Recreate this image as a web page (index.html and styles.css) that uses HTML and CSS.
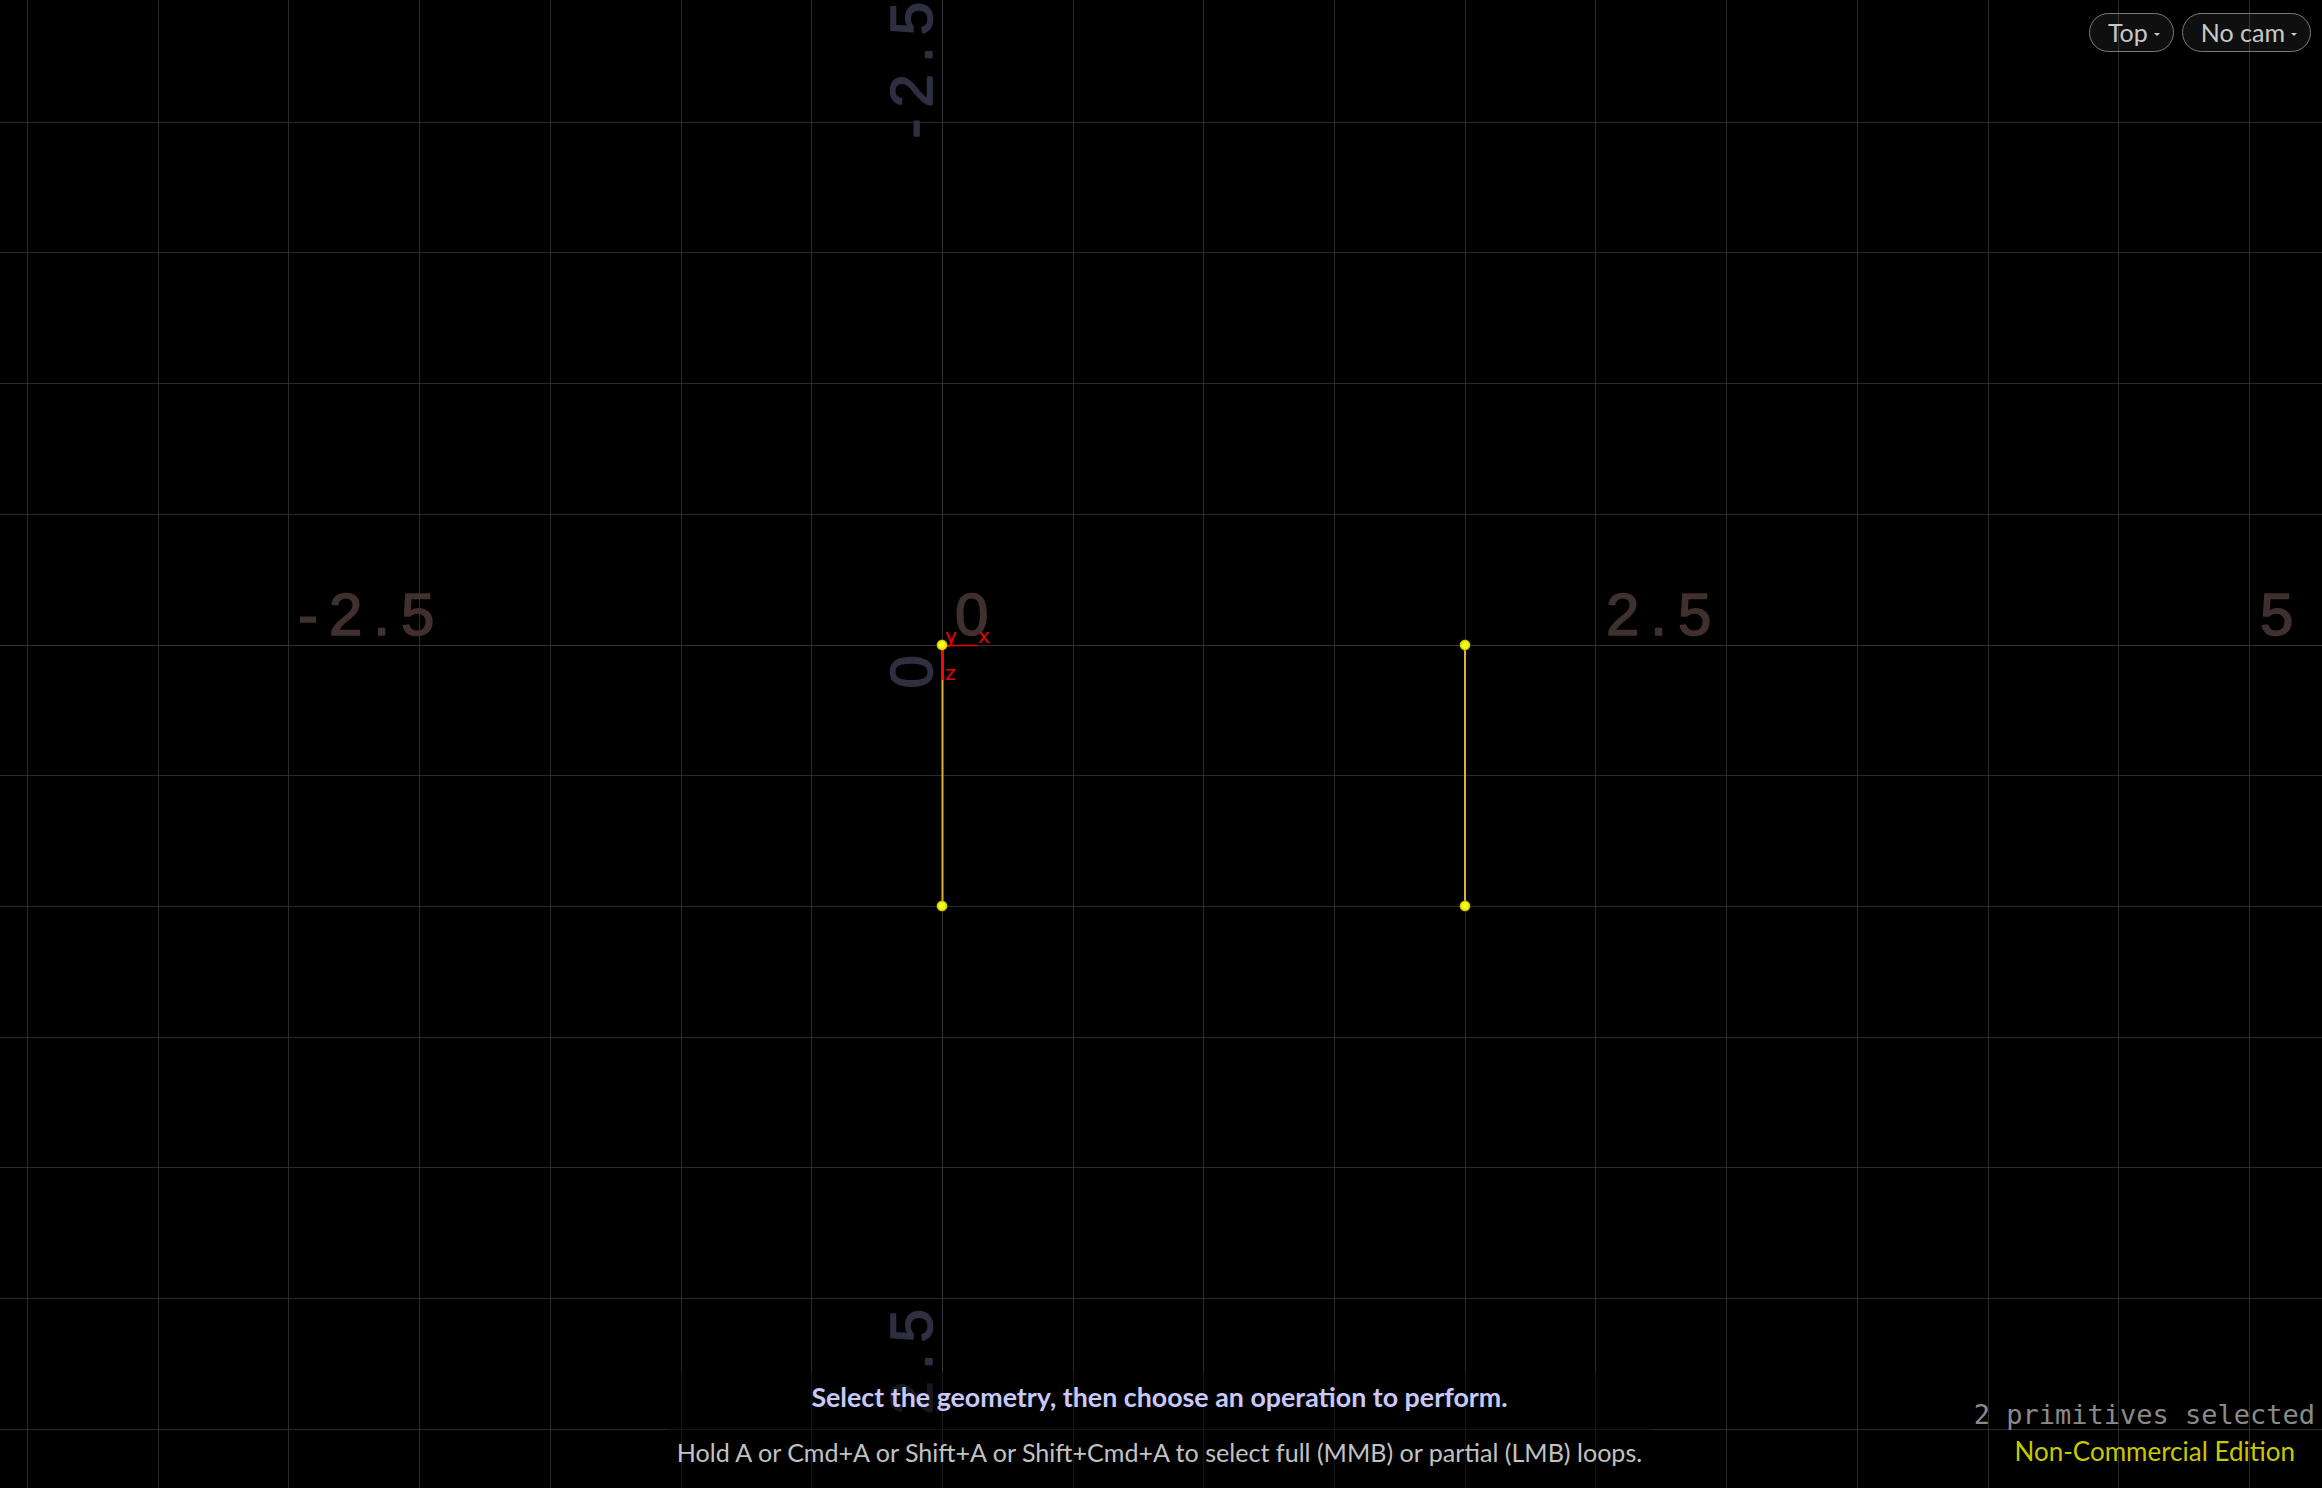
FILE: index.html
```html
<!DOCTYPE html>
<html lang="en">
<head>
<meta charset="utf-8">
<title>Viewport - Top</title>
<link rel="stylesheet" href="styles.css">
</head>
<body>
<div class="viewport">
  <svg class="scene" width="2322" height="1488" viewBox="0 0 2322 1488" xmlns="http://www.w3.org/2000/svg">
    <defs>
      <radialGradient id="pt" cx="50%" cy="50%" r="50%">
        <stop offset="0" stop-color="#ffff40"/>
        <stop offset="0.55" stop-color="#f4f400"/>
        <stop offset="0.8" stop-color="#c8c800"/>
        <stop offset="1" stop-color="#808000" stop-opacity="0"/>
      </radialGradient>
    </defs>
    <g class="grid" shape-rendering="crispEdges">
      <line x1="27.5" y1="0" x2="27.5" y2="1488"/>
      <line x1="158.5" y1="0" x2="158.5" y2="1488"/>
      <line x1="288.5" y1="0" x2="288.5" y2="1488"/>
      <line x1="419.5" y1="0" x2="419.5" y2="1488"/>
      <line x1="550.5" y1="0" x2="550.5" y2="1488"/>
      <line x1="681.5" y1="0" x2="681.5" y2="1488"/>
      <line x1="811.5" y1="0" x2="811.5" y2="1488"/>
      <line x1="1073.5" y1="0" x2="1073.5" y2="1488"/>
      <line x1="1203.5" y1="0" x2="1203.5" y2="1488"/>
      <line x1="1334.5" y1="0" x2="1334.5" y2="1488"/>
      <line x1="1465.5" y1="0" x2="1465.5" y2="1488"/>
      <line x1="1595.5" y1="0" x2="1595.5" y2="1488"/>
      <line x1="1726.5" y1="0" x2="1726.5" y2="1488"/>
      <line x1="1857.5" y1="0" x2="1857.5" y2="1488"/>
      <line x1="1988.5" y1="0" x2="1988.5" y2="1488"/>
      <line x1="2118.5" y1="0" x2="2118.5" y2="1488"/>
      <line x1="2249.5" y1="0" x2="2249.5" y2="1488"/>
      <line x1="0" y1="122.5" x2="2322" y2="122.5"/>
      <line x1="0" y1="252.5" x2="2322" y2="252.5"/>
      <line x1="0" y1="383.5" x2="2322" y2="383.5"/>
      <line x1="0" y1="514.5" x2="2322" y2="514.5"/>
      <line x1="0" y1="775.5" x2="2322" y2="775.5"/>
      <line x1="0" y1="906.5" x2="2322" y2="906.5"/>
      <line x1="0" y1="1037.5" x2="2322" y2="1037.5"/>
      <line x1="0" y1="1167.5" x2="2322" y2="1167.5"/>
      <line x1="0" y1="1298.5" x2="2322" y2="1298.5"/>
      <line x1="0" y1="1429.5" x2="2322" y2="1429.5"/>
    </g>
    <g class="axes" shape-rendering="crispEdges">
      <line x1="942.5" y1="0" x2="942.5" y2="1488"/>
      <line x1="0" y1="645.5" x2="2322" y2="645.5"/>
    </g>
    <g class="labels-x">
      <text x="298" y="635">-2.5</text>
      <text x="955" y="635">0</text>
      <text x="1606" y="635">2.5</text>
      <text x="2260" y="635">5</text>
    </g>
    <g class="labels-z">
      <text transform="translate(932 -9) rotate(-90)">-2.5</text>
      <text transform="translate(932 644) rotate(-90)">0</text>
      <text transform="translate(932 1298) rotate(-90)">2.5</text>
    </g>
    <g class="prims">
      <line x1="942.5" y1="645" x2="942.5" y2="906"/>
      <line x1="1465" y1="645" x2="1465" y2="906"/>
    </g>
    <g class="gnomon">
      <line x1="942.5" y1="645.5" x2="978" y2="645.5"/>
      <line x1="942.5" y1="645.5" x2="942.5" y2="680"/>
      <text x="945" y="643">y</text>
      <text x="978" y="643">x</text>
      <text x="945" y="680">z</text>
    </g>
    <g class="points" fill="url(#pt)">
      <circle cx="942" cy="645" r="6"/>
      <circle cx="942" cy="906" r="6"/>
      <circle cx="1465" cy="645" r="6"/>
      <circle cx="1465" cy="906" r="6"/>
    </g>
  </svg>

  <div class="view-menus">
    <div class="pill">Top<span class="caret"></span></div>
    <div class="pill">No cam<span class="caret"></span></div>
  </div>

  <div class="hint">
    <div class="hint-title">Select the geometry, then choose an operation to perform.</div>
    <div class="hint-detail">Hold A or Cmd+A or Shift+A or Shift+Cmd+A to select full (MMB) or partial (LMB) loops.</div>
  </div>

  <div class="status">
    <div class="selection-count">2 primitives selected</div>
    <div class="edition">Non-Commercial Edition</div>
  </div>
</div>
</body>
</html>
```

FILE: styles.css
```css
html, body {
  margin: 0;
  padding: 0;
  background: #000;
  overflow: hidden;
}

.viewport {
  position: relative;
  width: 2322px;
  height: 1488px;
  background: #000;
  overflow: hidden;
  font-family: Lato, "Noto Sans", sans-serif;
}

.scene {
  display: block;
}

.grid line {
  stroke: #2a2a30;
  stroke-width: 1;
}

.axes line {
  stroke: #323238;
  stroke-width: 1;
}

.labels-x text,
.labels-z text {
  font-family: "Liberation Sans", Arial, sans-serif;
  font-size: 60px;
  letter-spacing: 11px;
  stroke-width: 1.6px;
  stroke-linejoin: round;
}

.labels-x text {
  fill: #40302f;
  stroke: #40302f;
}

.labels-z text {
  fill: #2f2f42;
  stroke: #2f2f42;
  text-anchor: end;
}

.prims line {
  stroke: #dcae3c;
  stroke-width: 2;
}

.gnomon line {
  stroke: #ee0000;
  stroke-width: 1.5;
}

.gnomon text {
  fill: #ee0000;
  font-family: "DejaVu Sans", sans-serif;
  font-size: 20px;
}

.view-menus {
  position: absolute;
  top: 13px;
  right: 11px;
  display: flex;
  gap: 8px;
}

.pill {
  box-sizing: border-box;
  height: 39px;
  display: flex;
  align-items: center;
  gap: 6px;
  padding: 0 13px 0 18px;
  border: 1px solid #7a7a7a;
  border-radius: 20px;
  background: rgba(255, 255, 255, 0.06);
  color: #c8c8c8;
  font-family: Lato, "Noto Sans", sans-serif;
  font-size: 25px;
  line-height: 37px;
}

.caret {
  width: 0;
  height: 0;
  margin-top: 4px;
  border-left: 3px solid transparent;
  border-right: 3px solid transparent;
  border-top: 3px solid #c8c8c8;
}

.hint {
  position: absolute;
  left: 668px;
  width: 983px;
  top: 1372px;
  bottom: 0;
  background: rgba(0, 0, 0, 0.5);
  display: flex;
  flex-direction: column;
  align-items: center;
}

.hint-title {
  margin-top: 10px;
  font-size: 26.8px;
  line-height: 30px;
  font-weight: 700;
  color: #c8c8fa;
}

.hint-detail {
  margin-top: 25px;
  font-size: 25.1px;
  line-height: 30px;
  color: #c2c2c2;
}

.status {
  position: absolute;
  right: 7px;
  top: 1399px;
  display: flex;
  flex-direction: column;
  align-items: flex-end;
}

.selection-count {
  font-family: "DejaVu Sans Mono", "Liberation Mono", monospace;
  font-size: 27px;
  line-height: 32px;
  color: #8a8a8a;
}

.edition {
  margin: 5px 20px 0 0;
  font-family: Lato, "Noto Sans", sans-serif;
  font-size: 26px;
  line-height: 30px;
  color: #c8c800;
}
```
